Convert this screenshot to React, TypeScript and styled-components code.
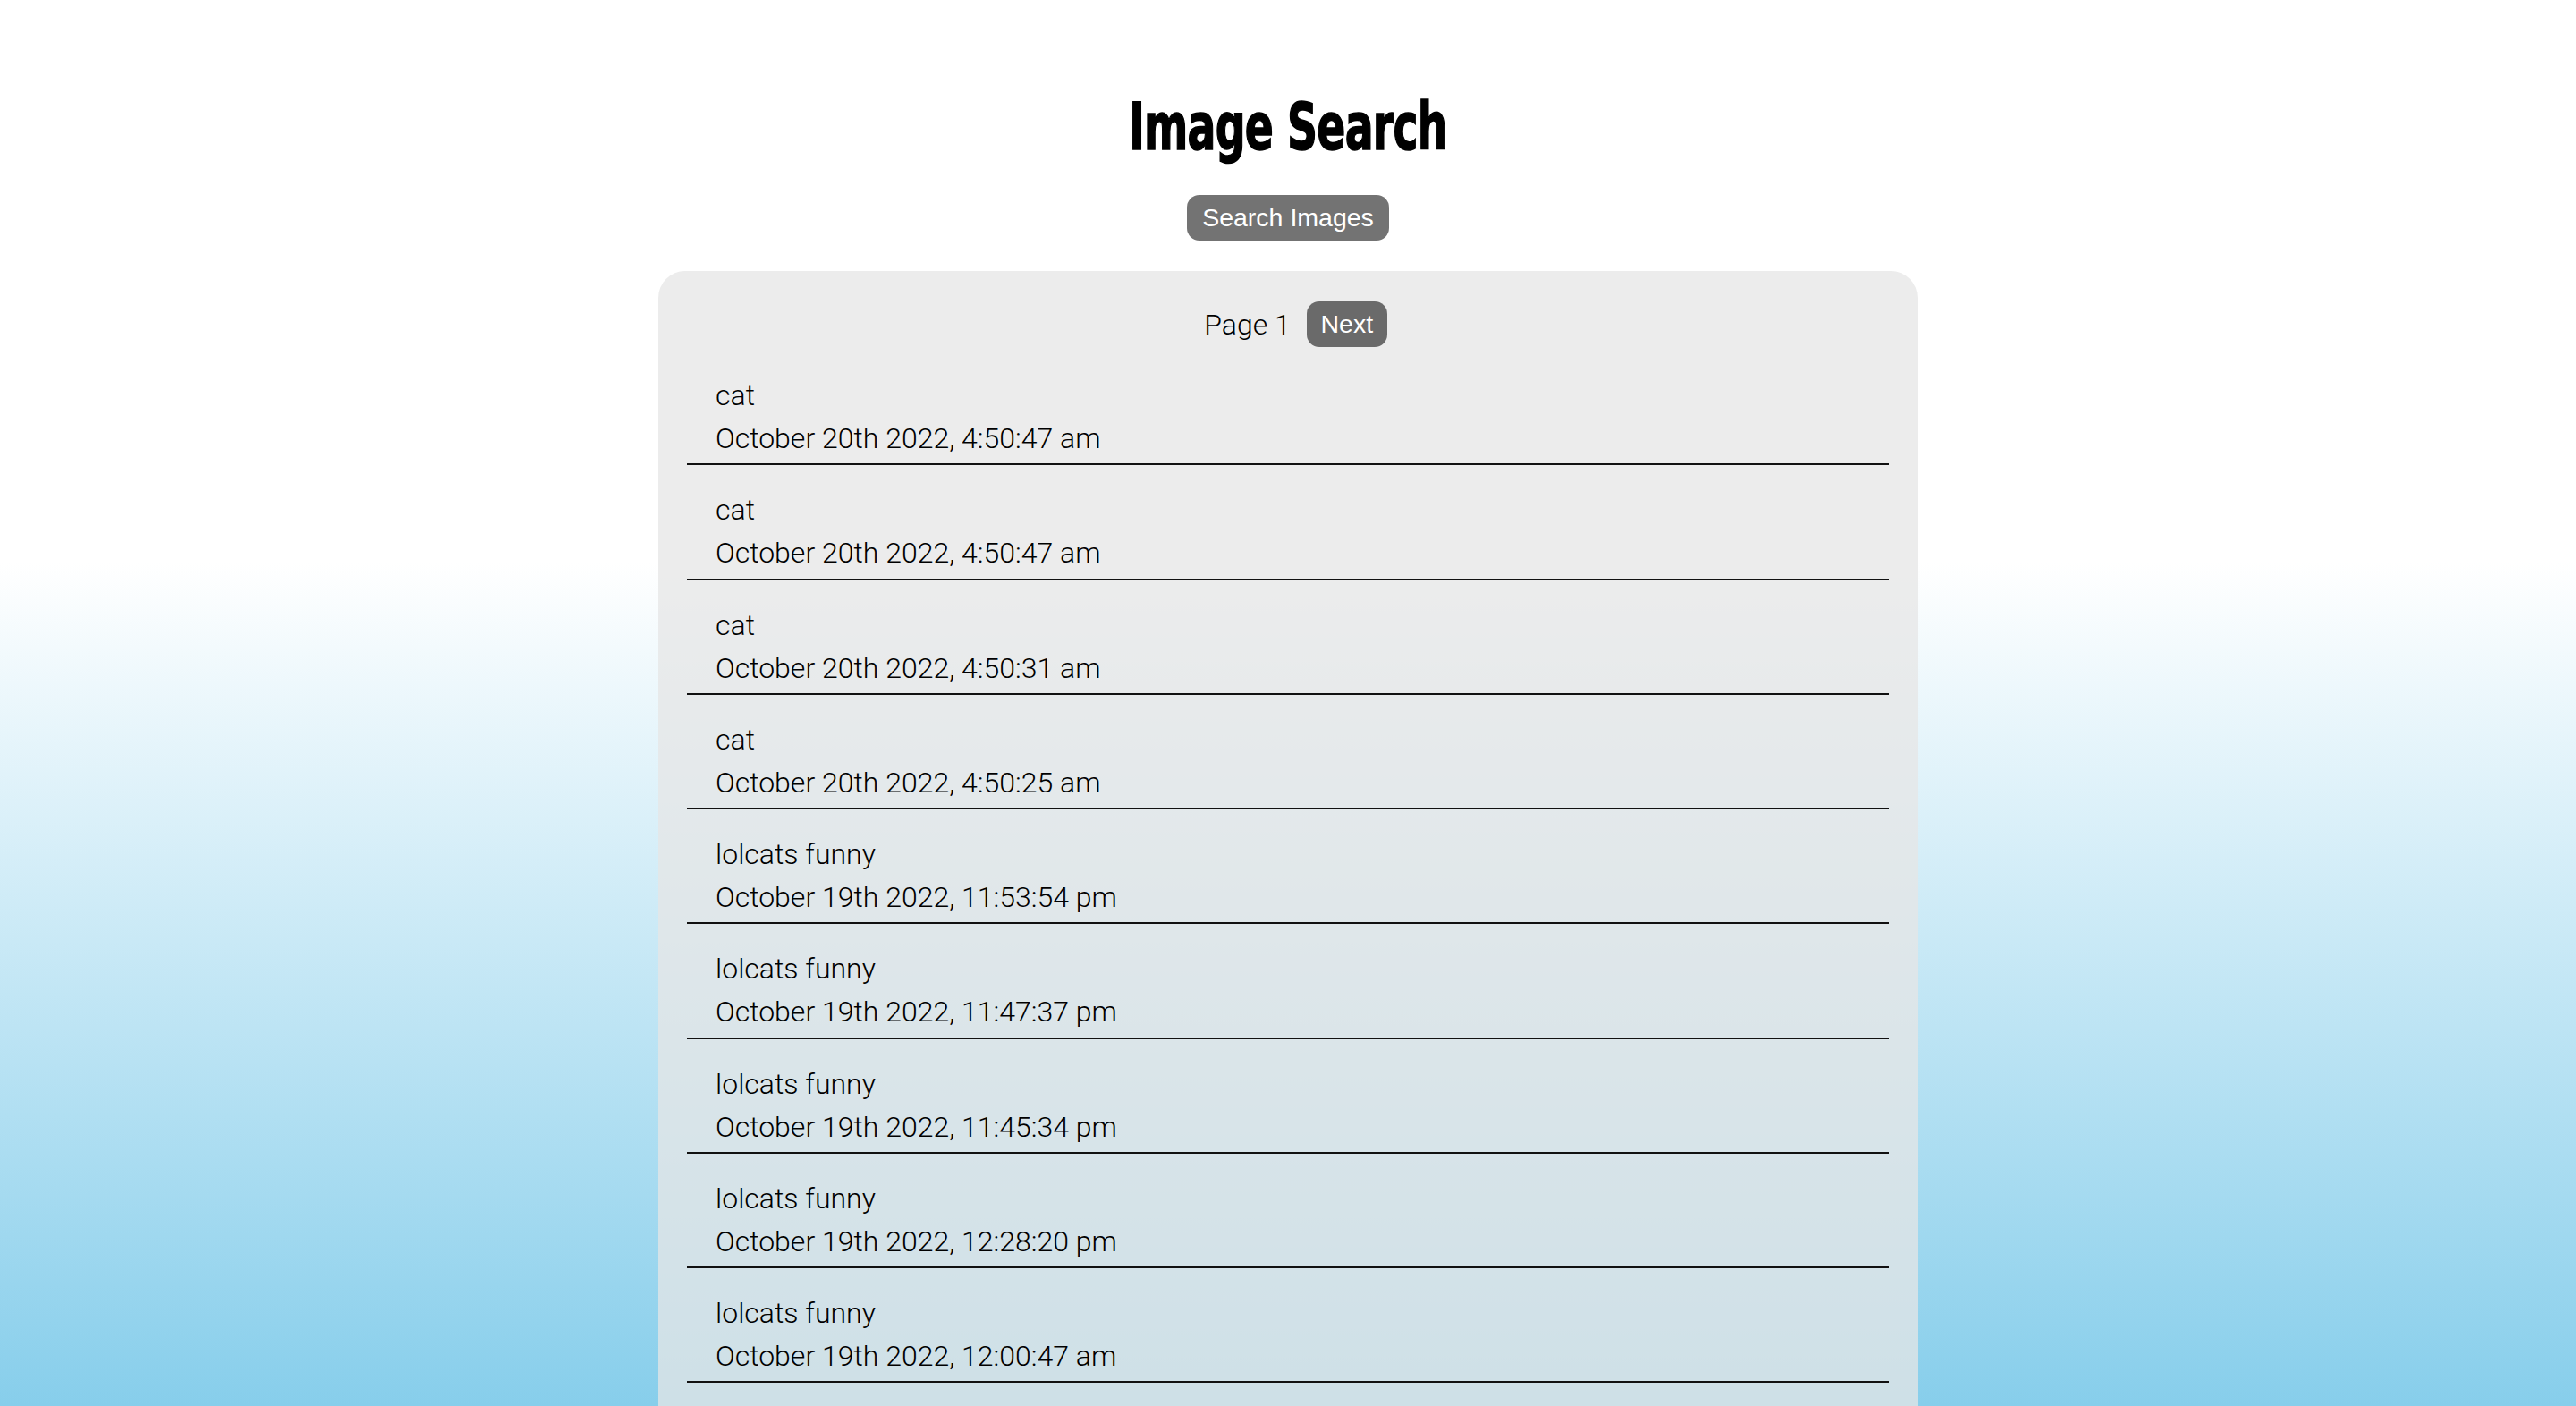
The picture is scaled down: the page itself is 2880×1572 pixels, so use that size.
import React from "react";
import styled, { createGlobalStyle } from "styled-components";

const GlobalStyle = createGlobalStyle`
  html, body {
    margin: 0;
    padding: 0;
  }
  body {
    background: linear-gradient(180deg, #ffffff 40%, #87ceeb 100%) fixed;
    min-height: 100vh;
    font-family: Roboto, "Noto Sans", sans-serif;
    font-weight: 300;
    color: #000;
  }
`;

const Page = styled.main`
  display: flex;
  flex-direction: column;
  align-items: center;
  padding-top: 102px;
`;

const Title = styled.h1`
  margin: 0 0 36px;
  font-family: "DejaVu Sans Condensed", "Liberation Sans", sans-serif;
  font-weight: 700;
  font-size: 73px;
  line-height: 80px;
  letter-spacing: -1px;
  color: #000;
  -webkit-text-stroke: 1.5px #000;
  transform: scaleX(0.72);
`;

const PillButton = styled.button<{ $wide?: boolean }>`
  display: inline-flex;
  align-items: center;
  justify-content: center;
  height: 51px;
  width: ${(p) => (p.$wide ? "226px" : "90px")};
  padding: 0;
  border: none;
  border-radius: 14px;
  background: rgba(0, 0, 0, 0.55);
  color: #fff;
  font-family: "Liberation Sans", Arial, sans-serif;
  font-weight: 400;
  font-size: 28.5px;
  cursor: pointer;
`;

const Panel = styled.section`
  box-sizing: border-box;
  width: 1408px;
  margin-top: 34px;
  padding: 34px 32px 40px;
  border-radius: 30px;
  background: rgba(230, 230, 230, 0.75);
`;

const Pagination = styled.div`
  display: flex;
  justify-content: center;
  align-items: center;
  gap: 18px;
  padding-left: 17px;
  font-size: 32px;
  line-height: 48px;
`;

const List = styled.ul`
  list-style: none;
  margin: 4px 0 0;
  padding: 0;
`;

const Row = styled.li`
  padding: 26px 0 4.25px 32px;
  border-bottom: 2px solid #111;
  font-size: 32px;
  line-height: 48px;
`;

const Line = styled.div`
  white-space: nowrap;
`;

const searches = [
  { term: "cat", date: "October 20th 2022, 4:50:47 am" },
  { term: "cat", date: "October 20th 2022, 4:50:47 am" },
  { term: "cat", date: "October 20th 2022, 4:50:31 am" },
  { term: "cat", date: "October 20th 2022, 4:50:25 am" },
  { term: "lolcats funny", date: "October 19th 2022, 11:53:54 pm" },
  { term: "lolcats funny", date: "October 19th 2022, 11:47:37 pm" },
  { term: "lolcats funny", date: "October 19th 2022, 11:45:34 pm" },
  { term: "lolcats funny", date: "October 19th 2022, 12:28:20 pm" },
  { term: "lolcats funny", date: "October 19th 2022, 12:00:47 am" },
  { term: "lolcats funny", date: "October 18th 2022, 11:58:12 pm" },
];

export default function App() {
  return (
    <>
      <GlobalStyle />
      <Page>
        <Title>Image Search</Title>
        <PillButton $wide>Search Images</PillButton>
        <Panel>
          <Pagination>
            <span>Page 1</span>
            <PillButton>Next</PillButton>
          </Pagination>
          <List>
            {searches.map((s, i) => (
              <Row key={i}>
                <Line>{s.term}</Line>
                <Line>{s.date}</Line>
              </Row>
            ))}
          </List>
        </Panel>
      </Page>
    </>
  );
}
